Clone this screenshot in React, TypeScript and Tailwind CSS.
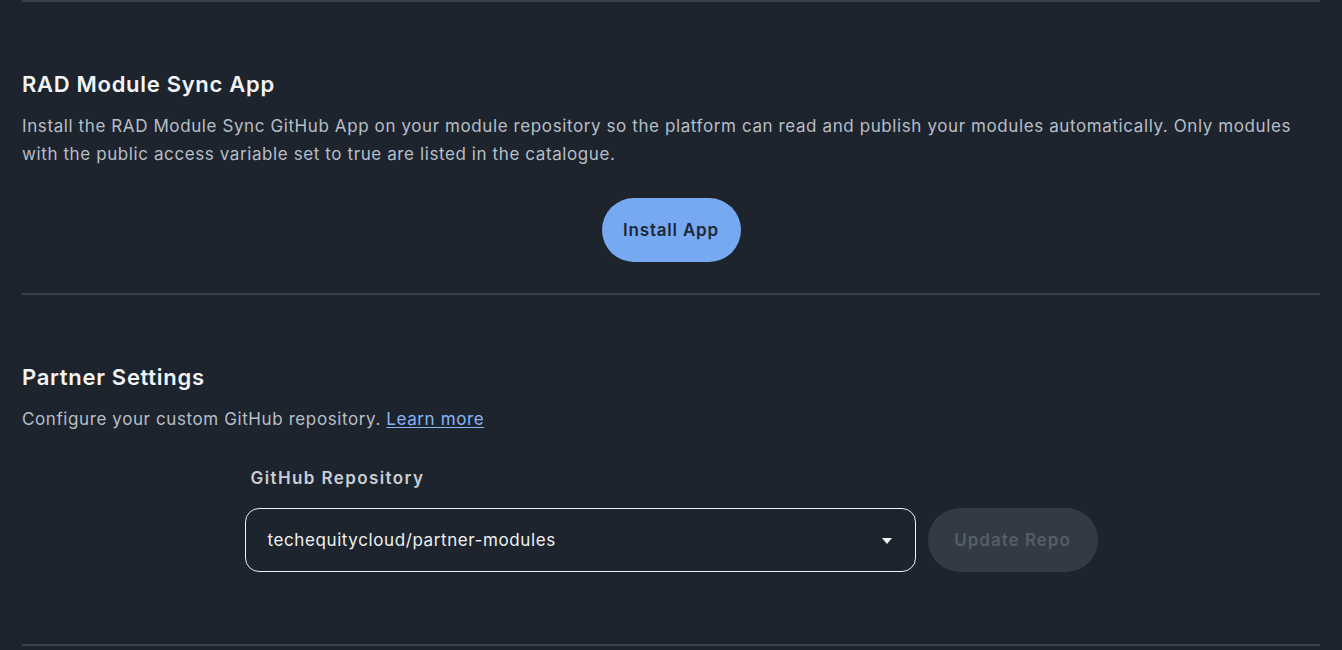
export default function App() {
  return (
    <div className="h-[650px] overflow-hidden bg-[#1d242e] px-[22px] font-['Inter','Noto_Sans',sans-serif] text-[17px] tracking-[0.6px]">
      <div className="h-[2px] bg-[#3a414b]" />

      {/* GitHub App install section */}
      <section className="pt-[68px]">
        <h2 className="text-[22px] leading-[28px] font-semibold tracking-[0.7px] text-[#f3f4f6]">RAD Module Sync App</h2>
        <p className="mt-[14px] leading-[28px] text-[#b8bec6]">
          Install the RAD Module Sync GitHub App on your module repository so the platform can read and publish your modules automatically. Only modules with the public access variable set to true are listed in the catalogue.
        </p>
        <div className="mt-[30px] flex justify-center">
          <button className="h-[64px] w-[139px] rounded-full bg-[#77a9f2] pt-[2px] font-semibold tracking-[0.8px] text-[#1c2738]">
            Install App
          </button>
        </div>
      </section>

      <div className="mt-[31px] h-[2px] bg-[#3a414b]" />

      {/* Partner repository settings */}
      <section className="pt-[68px]">
        <h2 className="text-[22px] leading-[28px] font-semibold tracking-[0.7px] text-[#f3f4f6]">Partner Settings</h2>
        <p className="mt-[14px] leading-[28px] text-[#b8bec6]">
          Configure your custom GitHub repository.{" "}
          <a href="#" className="text-[#8ab4f8] underline underline-offset-2">Learn more</a>
        </p>
        <div className="mt-[33px] flex justify-center gap-[12px]">
          <div className="w-[671px]">
            <label className="block px-[6px] leading-[24px] font-semibold tracking-[1.4px] text-[#c9ced5]">
              GitHub Repository
            </label>
            <div className="mt-[18px] flex h-[64px] items-center justify-between rounded-[14px] border border-[#eef0f2] pt-[1px] pl-[22px] pr-[22px] text-[#eef0f2]">
              <span>techequitycloud/partner-modules</span>
              <svg width="10" height="6" viewBox="0 0 10 6" className="mr-[1px]">
                <path d="M0 0h10L5 6z" fill="#f3f4f6" />
              </svg>
            </div>
          </div>
          <div className="flex flex-col justify-end">
            <button className="h-[64px] w-[170px] rounded-full bg-[#323a44] pt-[1px] font-semibold tracking-[1px] text-[#555d68]">
              Update Repo
            </button>
          </div>
        </div>
      </section>

      <div className="mt-[72px] h-[2px] bg-[#3a414b]" />
    </div>
  );
}
